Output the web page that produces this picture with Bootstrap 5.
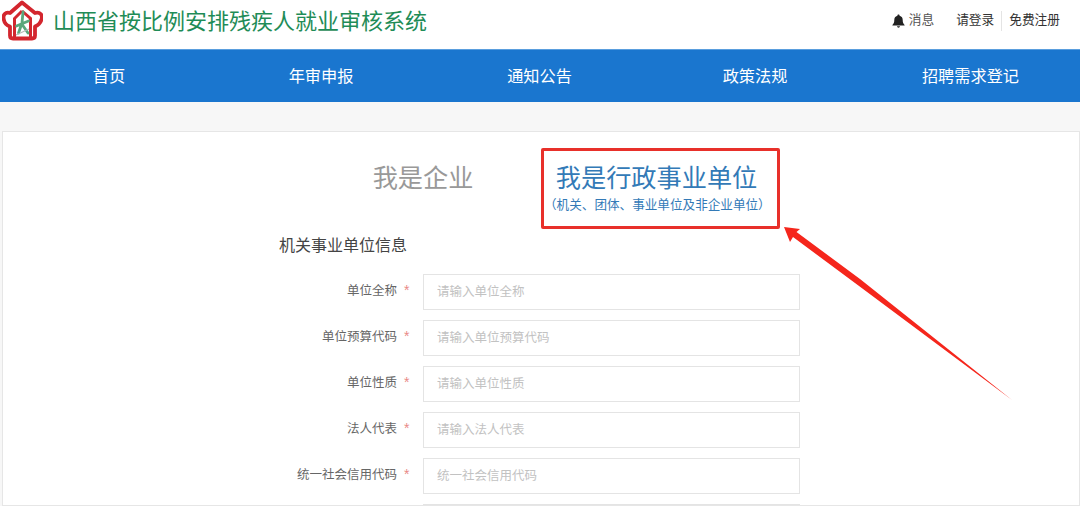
<!DOCTYPE html>
<html lang="zh-CN">
<head>
<meta charset="utf-8">
<title>山西省按比例安排残疾人就业审核系统</title>
<link href="https://cdn.jsdelivr.net/npm/bootstrap@5.3.0/dist/css/bootstrap.min.css" rel="stylesheet">
<style>
html,body{height:506px;overflow:hidden}
body{background:#f7f7f7;font-family:"Liberation Sans","Noto Sans CJK SC",sans-serif;color:#555;position:relative}
.site-head{height:49px;background:#fff;padding:0 20px 0 2px}
.site-logo{width:41px;height:41px;margin-top:-8px}
.site-title{font-size:22px;line-height:1;color:#1f8c57;margin:-6px 0 0 10px;font-weight:400}
.head-links{font-size:12.7px;color:#333;margin-top:-7px}
.head-links .msg{color:#555;margin-right:22px}
.head-links .sep{border-left:1px solid #e4e4e4;margin-left:7px;padding-left:7px}
.main-nav{height:53px;background:#1a76cf;border-top:1px solid #5a9ede}
.main-nav a{color:#fff;font-size:16.2px;text-decoration:none;line-height:53px}
.nav-a{width:218px}.nav-b{width:206px}.nav-c{width:231px}.nav-d{width:200px}.nav-e{width:225px;padding-left:6px}
.body-panel{margin:29px 0 0 2px;background:#fff;border:1px solid #e6e6e6;height:375px;overflow:hidden;padding-top:16px}
.tab-plain{font-size:25.2px;line-height:30px;color:#999;width:102px;margin:15px 67px 0 0}
.tab-active{width:239px;height:81px;border:3px solid #e8302a;border-radius:2px;color:#337ab7;padding:12px 8px 0 0}
.tab-active .tab-big{font-size:25.2px;line-height:30px}
.tab-active .tab-small{font-size:12.6px;line-height:16px;margin-top:4px;white-space:nowrap}
.tab-row{margin-left:369px}
.sect-title{font-size:16px;line-height:20px;color:#444;margin:7px 0 18px 276px}
.field-row{margin:0 0 10px 0;height:36px}
.field-name{width:394px;text-align:right;font-size:12.5px;color:#666;padding-bottom:1px}
.field-star{width:26px;color:#e98a86;font-size:14px;padding:0 0 3px 7px}
.field-row .form-control{width:377px;height:36px;border:1px solid #e4e4e4;border-radius:0;font-size:12.5px;padding:0 13px;box-shadow:none}
.field-row .form-control::placeholder{color:#c2c2c2}
.arrow-mark{position:absolute;left:770px;top:215px;width:260px;height:200px}
</style>
</head>
<body>
<header class="site-head d-flex align-items-center justify-content-between">
  <div class="d-flex align-items-center">
    <svg class="site-logo" viewBox="0 0 41 41" aria-hidden="true">
      <path d="M20 2.5 L33 13 C38 11.5 41 15 39.5 19.5 C38.5 23.5 35.5 25.5 33 26.5 L33 35.5 Q33 38.5 30 38.5 L11 38.5 Q8 38.5 8 35.5 L8 26.5 C5 25.5 2.5 23.5 1.8 19.5 C0.5 15 3.5 11.5 8 13 Z" fill="none" stroke="#d3262e" stroke-width="3.8" stroke-linejoin="round"/>
      <path d="M20 11 L28.5 18.5 L28.5 37 M12.5 37 L12.5 18.5 L20 11" fill="none" stroke="#d3262e" stroke-width="3"/>
      <path d="M21 12 L20 23 M14.5 26 L26.5 21 M20 23 L16.5 33 M20.5 25 L26 33" fill="none" stroke="#5aa77c" stroke-width="2.8" stroke-linecap="round"/>
      <path d="M14 35 L27 29" fill="none" stroke="#b9b9b9" stroke-width="1.2"/>
    </svg>
    <h1 class="site-title">山西省按比例安排残疾人就业审核系统</h1>
  </div>
  <div class="head-links d-flex align-items-center">
    <span class="msg d-flex align-items-center gap-1">
      <svg width="13" height="14" viewBox="0 0 13 14" aria-hidden="true"><path d="M6.5 0.5 C7.2 0.5 7.6 1 7.6 1.7 C9.8 2.3 10.7 4 10.7 6 C10.7 8.6 11.4 9.6 12.6 10.9 L12.6 11.5 L0.4 11.5 L0.4 10.9 C1.6 9.6 2.3 8.6 2.3 6 C2.3 4 3.2 2.3 5.4 1.7 C5.4 1 5.8 0.5 6.5 0.5 Z M5 12.3 L8 12.3 C7.9 13.2 7.3 13.7 6.5 13.7 C5.7 13.7 5.1 13.2 5 12.3 Z" fill="#222"/></svg>
      消息
    </span>
    <span>请登录</span>
    <span class="sep">免费注册</span>
  </div>
</header>
<nav class="main-nav d-flex text-center">
  <a class="nav-a" href="#">首页</a>
  <a class="nav-b" href="#">年审申报</a>
  <a class="nav-c" href="#">通知公告</a>
  <a class="nav-d" href="#">政策法规</a>
  <a class="nav-e" href="#">招聘需求登记</a>
</nav>
<main class="body-panel">
  <div class="tab-row d-flex align-items-start">
    <div class="tab-plain text-center">我是企业</div>
    <div class="tab-active text-center">
      <div class="tab-big">我是行政事业单位</div>
      <div class="tab-small">（机关、团体、事业单位及非企业单位）</div>
    </div>
  </div>
  <div class="sect-title">机关事业单位信息</div>
  <form>
    <div class="field-row d-flex align-items-center"><label class="field-name">单位全称</label><span class="field-star">*</span><input class="form-control" placeholder="请输入单位全称"></div>
    <div class="field-row d-flex align-items-center"><label class="field-name">单位预算代码</label><span class="field-star">*</span><input class="form-control" placeholder="请输入单位预算代码"></div>
    <div class="field-row d-flex align-items-center"><label class="field-name">单位性质</label><span class="field-star">*</span><input class="form-control" placeholder="请输入单位性质"></div>
    <div class="field-row d-flex align-items-center"><label class="field-name">法人代表</label><span class="field-star">*</span><input class="form-control" placeholder="请输入法人代表"></div>
    <div class="field-row d-flex align-items-center"><label class="field-name">统一社会信用代码</label><span class="field-star">*</span><input class="form-control" placeholder="统一社会信用代码"></div>
    <div class="field-row d-flex align-items-center"><label class="field-name"></label><span class="field-star"></span><input class="form-control"></div>
  </form>
</main>
<svg class="arrow-mark" viewBox="770 215 260 200" aria-hidden="true">
  <polygon points="784,227 800,229 796.5,232 860,279 1012,400 855,283 793,237 790,242" fill="#f5261c"/>
</svg>
</body>
</html>
